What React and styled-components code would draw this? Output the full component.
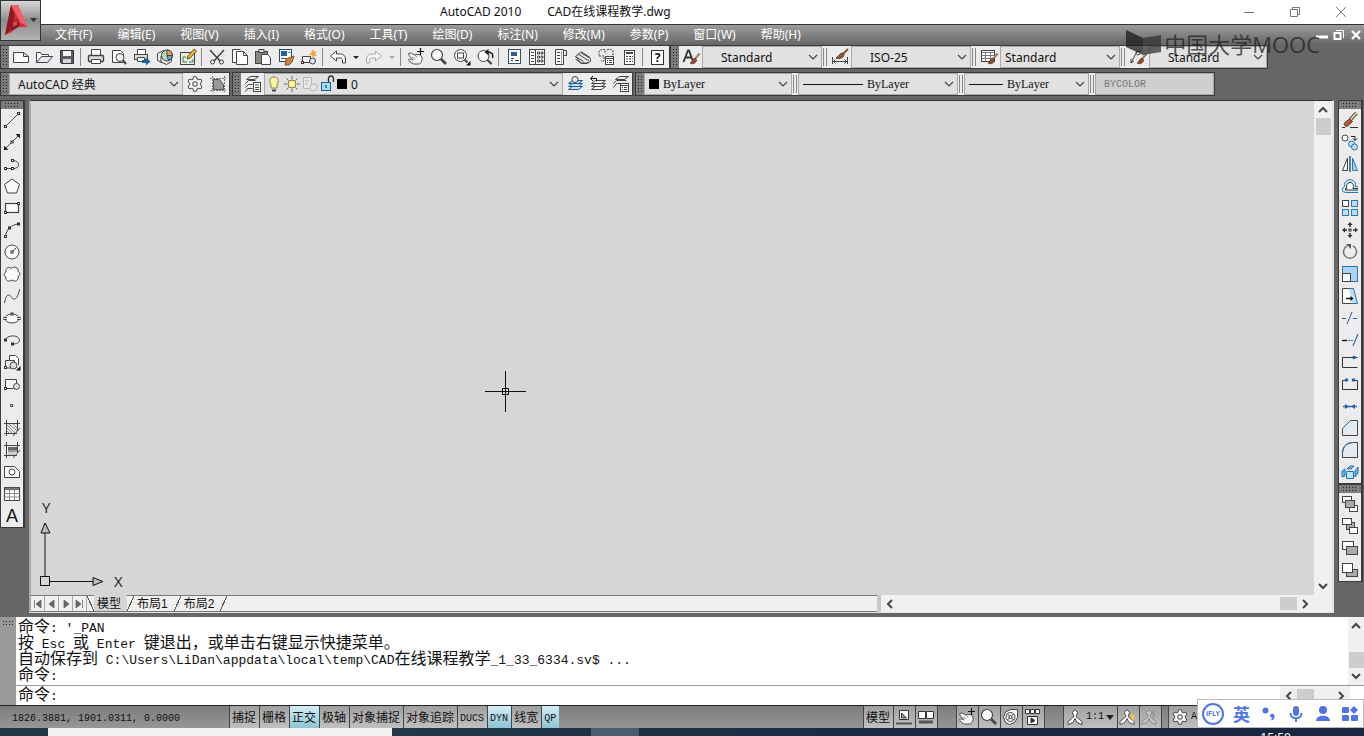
import { useState } from "react";
import styled, { createGlobalStyle, css } from "styled-components";
import { Settings } from "lucide-react";

const uiFont = `"Noto Sans", "Noto Sans CJK SC", sans-serif`;
const monoFont = `"Liberation Mono", "Noto Sans CJK SC", monospace`;

const Node = ({ x, y, c }) => (
  <rect x={x - 1} y={y - 1} width="2" height="2" fill="#fff" stroke={c || "#333"} />
);

const Brush = () => (
  <g transform="translate(5 4) scale(0.8)">
    <path d="M15.5 2L10 8.500" stroke="#8a5a34" strokeWidth="2.400" />
    <path d="M15 2L10.500 7.500" stroke="#e5c79c" strokeWidth="0.800" />
    <path d="M10 8c-3 0-3 3-6 6 4 2 8-1 8-4z" fill="#8a4f30" stroke="#5f3520" />
  </g>
);

const Hand = () => (
  <>
    <path
      d="M1.500 5.500c2-1 4 0 6 1.500 2-1 5-1 7 1 1 3 1 5-2 8H6.500C4 15 2 13 1.500 11.500c1-1 3 0 4.500.5C4 10 2 8 1.500 5.500z"
      fill="#f6f6f6"
      stroke="#555"
    />
    <path d="M7.500 7l3 2M5 9l3 2" stroke="#888" />
  </>
);

const Sheets = ({ fill }) => (
  <>
    <path d="M6.500 11.500h10l-4 3h-10z" fill={fill} />
    <path d="M6.500 8.500h10l-4 3h-10z" fill={fill} />
    <path d="M6.500 5.500h10l-4 3h-10z" fill={fill} />
  </>
);

const icons = {
  newFile: <path d="M1.500 4.500h10l5 4v6h-15zM11.500 4.500v4h5" fill="#fff" />,
  open: (
    <>
      <path d="M1.500 14.500v-10h4l1 2h7v2" fill="#fff" />
      <path d="M1.500 14.500l5-6h11l-5 6z" fill="#e8e8ee" />
    </>
  ),
  save: (
    <>
      <path d="M2.500 2.500h13v13h-12l-1-1z" fill="#5a5a66" stroke="#333" />
      <rect x="5" y="3" width="8" height="5" fill="#f4f4f4" stroke="none" />
      <rect x="5" y="11" width="8" height="4" fill="#d5d5d5" stroke="none" />
    </>
  ),
  print: (
    <>
      <path d="M4.500 7.500v-6h9v6" fill="#fff" />
      <rect x="1.500" y="7.500" width="15" height="6" rx="1" fill="#ddd" strokeWidth="1.400" />
      <path d="M4.500 11.500h9v4h-9z" fill="#fff" />
    </>
  ),
  preview: (
    <>
      <path d="M2.500 2.500h8l3 3v9h-11z" fill="#fff" />
      <circle cx="10" cy="9.500" r="4" fill="#e8f0f4" />
      <path d="M13 12.500l3 3.500" strokeWidth="2" />
    </>
  ),
  publish: (
    <>
      <path d="M4.500 6.500v-5h8v5" fill="#fff" />
      <rect x="1.500" y="6.500" width="13" height="5" fill="#ddd" />
      <path d="M4.500 9.500h7v4h-7z" fill="#fff" />
      <path d="M9 12h4V9.500l4.500 4-4.500 4V15H9z" fill="#1d62a8" stroke="none" />
    </>
  ),
  dwf: (
    <>
      <path d="M1.500 5.500l6-3 8 2v9l-5 3-9-4z" fill="#e6f2f2" />
      <circle cx="11" cy="7.500" r="5.500" fill="#b4dcb8" />
      <path d="M11 7.500V2a5.500 5.500 0 0 1 5.500 5.500z" fill="#e9a23a" />
      <path d="M11 7.500h5.500a6 6 0 0 1-4 5z" fill="#6aa6da" />
      <path d="M5 8v7" />
    </>
  ),
  markup: (
    <>
      <rect x="1.500" y="4.500" width="14" height="12" fill="#e4efdd" />
      <path d="M4 9h3M4 9v5h4M10 14h4v-3" stroke="#3f7a52" />
      <path d="M8 11l1-3 6-7 2.500 2-6.500 7z" fill="#f0b93c" stroke="#6d4c1a" />
    </>
  ),
  cut: (
    <>
      <path d="M2 2l10 11M16 2L6 13" strokeWidth="1.600" />
      <circle cx="4.500" cy="14" r="2" />
      <circle cx="13.500" cy="14" r="2" />
    </>
  ),
  copy: (
    <>
      <path d="M9.500 14.500h-8v-13h8" fill="#fff" />
      <path d="M5.500 3.500h7l4 4v9h-11zM12.500 3.500v4h4" fill="#fff" />
    </>
  ),
  paste: (
    <>
      <rect x="1.500" y="3.500" width="12" height="12" fill="#8d8780" />
      <rect x="5" y="1.500" width="5" height="3" fill="#ddd" />
      <path d="M7.500 6.500h6l3 3v7h-9z" fill="#fff" />
    </>
  ),
  match: (
    <>
      <rect x="2.500" y="1.500" width="12" height="12" fill="#fff" stroke="#1f4e79" />
      <rect x="4" y="3" width="6" height="5" fill="#1f5fa0" stroke="none" />
      <path d="M11.500 4.500h2M4 10.500h5" stroke="#555" />
      <path d="M9 11l5-2 3-1-2 6-3 3H8z" fill="#c98544" stroke="#8a4f2a" />
    </>
  ),
  blockEdit: (
    <>
      <path d="M2.500 14.500v-6h8v6z" fill="#f4f4f4" />
      <circle cx="12.500" cy="13" r="3" fill="#d8e6ee" />
      <Node x={2.500} y={14.500} />
      <path d="M13 1l1 3 3-1-2 3 2 2-3 0-1 2-1-3-3 0 2-2z" fill="#f3a53a" stroke="none" />
    </>
  ),
  undo: <path d="M1.500 8l6-5v3h4c3 0 5 2 5 5v4h-3v-3c0-1-1-2-2-2h-4v3z" fill="#fff" />,
  redo: (
    <path
      d="M16.500 8l-6-5v3h-4c-3 0-5 2-5 5v4h3v-3c0-1 1-2 2-2h4v3z"
      fill="#f4f4f4"
      stroke="#aaa"
    />
  ),
  pan: (
    <>
      <Hand />
      <path d="M13.500 0v7M10 3.500h7" stroke="#111" strokeWidth="1.200" />
    </>
  ),
  zoom: (
    <>
      <circle cx="7" cy="7" r="5.500" fill="#fafafa" strokeWidth="1.200" />
      <path d="M11 11l5 5" strokeWidth="2.600" />
    </>
  ),
  zoomWindow: (
    <>
      <circle cx="7.500" cy="7.500" r="6" fill="#fafafa" />
      <rect x="4.500" y="5" width="6" height="5" />
      <path d="M11.500 11.500l3 3" strokeWidth="2" />
      <path d="M17.500 13v4.500H13z" fill="#111" stroke="none" />
    </>
  ),
  zoomPrev: (
    <>
      <circle cx="7.500" cy="8" r="5.500" fill="#fafafa" />
      <path d="M11.500 12l4 4" strokeWidth="2.200" />
      <path d="M16.500 10c1-4-1-6-5-6" stroke="#111" strokeWidth="1.400" />
      <path d="M12.500 1v6.500L8.500 4z" fill="#111" stroke="none" />
    </>
  ),
  properties: (
    <>
      <rect x="3.500" y="1.500" width="12" height="14" fill="#fff" stroke="#33536e" />
      <rect x="6" y="4" width="6" height="4" fill="#2d5c8c" stroke="none" />
      <path d="M6 10.500h3M10 12.500h4M6 12.500h2" />
    </>
  ),
  designCenter: (
    <>
      <rect x="1.500" y="1.500" width="15" height="15" fill="#fff" />
      <path d="M7.500 1.500v15M3 4.500h3M3 7.500h3M3 10.500h3M3 13.500h3" />
      <path d="M9.500 4h2v2h-2zM13 4h2v2h-2zM9.500 8h2v2h-2zM13 8h2v2h-2zM9.500 12h2v2h-2zM13 12h2v2h-2z" />
    </>
  ),
  palettes: (
    <>
      <path d="M4.500 1.500h8v15h-8z" fill="#fff" />
      <path d="M12.500 2.500h3v5h-3M6 4.500h3M6 7.500h3M6 10.500h3M6 13.500h3" />
      <path d="M10.500 3v12" stroke="#999" />
    </>
  ),
  sheetSet: (
    <>
      <path d="M1.500 8.500l5-4 10 6v3l-4 2h-5z" fill="#e8e8e8" />
      <path d="M4 6l11 7M1.500 11l5 4h8M7 3.500l9 6M1.500 8.500l8 5" />
    </>
  ),
  markupSet: (
    <>
      <path d="M2 7.500V3l3-1.500h3V5M10 2l3-1 3 2v5" strokeDasharray="2 1" />
      <path d="M2 8h5v5H4" strokeDasharray="2 1" />
      <rect x="8.500" y="8.500" width="8" height="8" fill="#fff" />
      <path d="M8.500 10.500h8M10 12.500h1M12 12.500h3M10 14.500h1M12 14.500h3" />
    </>
  ),
  calc: (
    <>
      <rect x="4.500" y="2.500" width="10" height="14" fill="#fff" />
      <path d="M6 5h7" strokeWidth="2" />
      <path d="M6 8.500h7M6 11h7M6 13.500h7" strokeDasharray="2 1" />
    </>
  ),
  textStyle: (
    <>
      <path d="M1.500 14L6 2.500h1L10.500 12M3.500 9.500h6" stroke="#333" strokeWidth="1.800" />
      <Brush />
    </>
  ),
  dimStyle: (
    <>
      <path d="M1.500 9v7M16.500 9v7M2 13.500h14M4.500 11.500l-2 2 2 2M13.500 11.500l2 2-2 2" />
      <path d="M17 1l-5 5" stroke="#8a5a34" strokeWidth="2" />
      <path d="M12 5c-3 0-4 3-7 5 4 1 7 0 8-3z" fill="#9a5a38" stroke="#5f3520" />
    </>
  ),
  tableStyle: (
    <>
      <rect x="1.500" y="2.500" width="13" height="11" fill="#fff" />
      <path d="M1.500 4.500h13M1.500 7.500h13M1.500 10.500h13M5.500 4v9M10.500 4v9" stroke="#777" />
      <Brush />
    </>
  ),
  leaderStyle: (
    <>
      <path d="M2 15L8 3h4M2 11v4l3-2M8 3c-2 3 0 5 3 3" />
      <Brush />
    </>
  ),
  gear: <Settings size={18} strokeWidth={1.4} fill="#f6f6f6" color="#555" />,
  workspace: (
    <>
      <path d="M4.500 4.500h6l4 5v5h-10z" fill="#999" stroke="#555" />
      <path d="M1 3.500h16M1 15.500h16M3.500 1v16M15.500 1v16" strokeDasharray="2 1" stroke="#777" />
    </>
  ),
  layerProps: (
    <>
      <path d="M6.500 1.500h8l-4 3h-8zM1.500 8.500l3-3h7M1.500 12.500l3-3h4M1.500 16.500l2-3h5" fill="none" />
      <rect x="9.500" y="7.500" width="7" height="9" fill="#fff" />
      <path d="M11 10h4M11 12.500h4M11 14.500h4" />
    </>
  ),
  makeCurrent: (
    <>
      <g stroke="#1e5f96">
        <Sheets fill="#c4e2f4" />
      </g>
      <circle cx="9" cy="4.500" r="3" fill="#f2f6f8" />
    </>
  ),
  layerPrev: (
    <>
      <Sheets fill="#fafafa" />
      <path d="M1.500 3.500h6v3M4 1L1.500 3.500 4 6" stroke="#111" />
    </>
  ),
  layerStates: (
    <>
      <path d="M7.500 1.500h9l-4 3h-9zM1.500 8.500l3-3h10M1.500 12.500l3-4h5" />
      <rect x="8.500" y="8.500" width="8" height="8" fill="#fff" />
      <path d="M8.500 10.500h8M10 12.500h1M12 12.500h3M10 14.500h1M12 14.500h3" />
    </>
  ),
  line: (
    <>
      <path d="M2.500 15.500L15.500 2.500" />
      <Node x={2.500} y={15.500} />
      <Node x={15.500} y={2.500} />
    </>
  ),
  xline: (
    <>
      <path d="M2 16L16 2" />
      <path d="M1 17v-4.500L5.500 17zM17 1v4.500L12.500 1z" fill="#222" stroke="none" />
      <Node x={9} y={9} />
    </>
  ),
  pline: (
    <>
      <path d="M2.500 13.500h8c7 0 7-8-1-8" />
      <Node x={2.500} y={13.500} />
      <Node x={9.500} y={13.500} />
      <Node x={9.500} y={5.500} />
    </>
  ),
  polygon: <path d="M9 2l7.500 5.500-3 8.500h-9l-3-8.500z" fill="#fafafa" />,
  rectangle: (
    <>
      <rect x="2.500" y="4.500" width="13" height="9" fill="#fafafa" strokeWidth="1.200" />
      <Node x={2.500} y={13.500} />
      <Node x={15.500} y={4.500} />
    </>
  ),
  arc: (
    <>
      <path d="M2.500 15.500C3 9 8 3.500 15.500 3" />
      <Node x={2.500} y={15.500} />
      <Node x={6.500} y={7} />
      <Node x={15.500} y={3} />
    </>
  ),
  circle: (
    <>
      <circle cx="9" cy="9" r="7" fill="#fafafa" />
      <path d="M9 9l4-4" />
      <Node x={9} y={9} />
    </>
  ),
  cloud: (
    <path
      d="M8 3.500c3-3 8-1 7 3 3 1 2 4 0 5 1 4-3 6-6 3.500-3 2-7 1-6-3-3-1-2-4 0-5-1-4 3-6 5-3.500z"
      fill="#fafafa"
    />
  ),
  spline: <path d="M1.500 16c1-5 2-8 4-8 3 0 3 5 6 4s4-5 5-10" />,
  ellipse: (
    <>
      <ellipse cx="9" cy="9.500" rx="7" ry="4.500" fill="#fafafa" />
      <Node x={2} y={9.500} />
      <Node x={9} y={5} />
      <Node x={16} y={9.500} />
    </>
  ),
  ellipseArc: (
    <>
      <path d="M2.500 9c1-5 13-6 14 0 0 3-3 4-7 4" />
      <Node x={2.500} y={9} />
      <Node x={9.500} y={13} />
    </>
  ),
  insertBlock: (
    <>
      <path d="M6.500 7V2.500h6l3 3V12" fill="#fff" />
      <path d="M2.500 15V7.500h9V15z" fill="#ececec" />
      <circle cx="10.500" cy="12.500" r="3.500" fill="#ddd" />
      <Node x={2.500} y={14.500} />
      <path d="M17.500 13v4.500H13z" fill="#111" stroke="none" />
    </>
  ),
  makeBlock: (
    <>
      <path d="M2.500 13.500v-9h11v9z" fill="#f4f4f4" />
      <circle cx="13.500" cy="11.500" r="3" fill="#e4e4e4" />
      <Node x={2.500} y={13.500} />
    </>
  ),
  point: <Node x={8.500} y={8.500} c="#555" />,
  hatch: (
    <>
      <path d="M1 4.500h16M1 14.500h13M3.500 1v16M14.500 1v11M17 9l-7 8" />
      <path d="M4 6l8 8M4 9l5 5M6 5l8 7M10 5l4 4M4 12l2 2" stroke="#888" />
    </>
  ),
  gradient: (
    <>
      <path d="M5 6h9v3H5z" fill="#666" stroke="none" />
      <path d="M5 9h9v2H5z" fill="#999" stroke="none" />
      <path d="M5 11h7v3H5z" fill="#ccc" stroke="none" />
      <path d="M1 4.500h16M1 14.500h13M3.500 1v16M14.500 1v11M17 9l-7 8" />
    </>
  ),
  region: (
    <>
      <path d="M1.500 3.500h10l5 5v6h-15z" fill="#fafafa" />
      <circle cx="9" cy="9" r="3" fill="#fff" />
    </>
  ),
  table: (
    <>
      <rect x="1.500" y="2.500" width="15" height="13" fill="#fff" />
      <path d="M2 4h14" strokeWidth="2.400" stroke="#777" />
      <path d="M1.500 8.500h15M1.500 12h15M6.500 5v10M11.500 5v10" stroke="#888" />
    </>
  ),
  erase: (
    <>
      <path d="M15.500 2L9 9" stroke="#5f5238" strokeWidth="3.800" />
      <path d="M15.500 2L9 9" stroke="#e8d9a8" strokeWidth="1.800" />
      <path d="M8.500 8l-5 4c-1 2 1 4 3 3l5-4.500z" fill="#b8583c" stroke="#5d2c1c" />
      <path d="M1 16.500h3M9 16.500h8" stroke="#333" />
    </>
  ),
  copyObj: (
    <>
      <circle cx="4" cy="5" r="3" fill="#fff" />
      <path d="M10 3.500h4v4M12 5.500l2 2 2-2" stroke="#222" />
      <circle cx="10.500" cy="11" r="3" fill="#bfe0f4" stroke="#2a78b4" />
      <circle cx="13.500" cy="14" r="3" fill="#bfe0f4" stroke="#2a78b4" />
    </>
  ),
  mirror: (
    <>
      <path d="M6.500 3v12.500h-5z" fill="#fff" />
      <path d="M11.500 3v12.500h5z" fill="#9fd0ee" stroke="#2a78b4" />
      <path d="M9 1v16" stroke="#1c4f7a" strokeWidth="1.400" />
    </>
  ),
  offset: (
    <>
      <path
        d="M17 9.500h-2.500c1.500-9-12.500-9-11 0-3 1-3 6 1 6H17"
        fill="#cfe8f6"
        stroke="#2a78b4"
      />
      <path d="M17 11.500h-5c3-8-9-8-6 0H4.500v1.500H17" fill="#fff" stroke="#333" />
    </>
  ),
  array: (
    <>
      <rect x="1.500" y="1.500" width="6" height="6" fill="#fff" />
      <rect x="10.500" y="1.500" width="6" height="6" fill="#bfe0f4" stroke="#2a78b4" />
      <rect x="1.500" y="10.500" width="6" height="6" fill="#bfe0f4" stroke="#2a78b4" />
      <rect x="10.500" y="10.500" width="6" height="6" fill="#bfe0f4" stroke="#2a78b4" />
    </>
  ),
  move: (
    <>
      <path
        d="M9 1l2.500 3h-5zM9 17l2.500-3h-5zM1 9l3-2.500v5zM17 9l-3-2.500v5z"
        fill="#333"
        stroke="none"
      />
      <path d="M9 3v3M9 12v3M3 9h3M12 9h3" stroke="#333" strokeWidth="1.600" />
      <Node x={9} y={9} />
    </>
  ),
  rotate: (
    <>
      <path d="M12 3a6.500 6.500 0 1 1-6 0" stroke="#777" strokeWidth="1.500" />
      <path d="M5 1h5v5z" fill="#555" stroke="none" />
    </>
  ),
  scale: (
    <>
      <rect x="1.500" y="1.500" width="15" height="15" fill="#a8d6f0" stroke="#2a78b4" />
      <rect x="1.500" y="8.500" width="8" height="8" fill="#fff" />
    </>
  ),
  stretch: (
    <>
      <path d="M8.500 1.500h4l4 15h-8z" fill="#bfe0f4" stroke="#2a78b4" />
      <path d="M8.500 1.500h-7v15h9" fill="#fff" />
      <path d="M5 11.500h6" stroke="#111" strokeWidth="1.400" />
      <path d="M12.500 11.500L9.500 9v5z" fill="#111" stroke="none" />
    </>
  ),
  trim: (
    <>
      <path d="M1 9.500h5M12 9.500h5" stroke="#2a5f98" strokeDasharray="4 1" />
      <path d="M11 3L6 15" stroke="#2a5f98" />
    </>
  ),
  extend: (
    <>
      <path d="M1 9.500h5" stroke="#111" strokeWidth="1.400" />
      <path d="M7 9.500h5" stroke="#2a78b4" strokeDasharray="2 1" />
      <path d="M17 3l-5 12" stroke="#2a78b4" strokeWidth="1.200" />
    </>
  ),
  breakPoint: (
    <>
      <path d="M16.500 4.500h-15v10h15" stroke="#333" />
      <circle cx="13" cy="4.500" r="1.800" fill="#1e64aa" stroke="none" />
    </>
  ),
  breakObj: (
    <>
      <path d="M4.500 5.500h-3v9h15v-9h-3" stroke="#333" />
      <circle cx="5.500" cy="5" r="1.800" fill="#1e64aa" stroke="none" />
      <circle cx="12.500" cy="5" r="1.800" fill="#1e64aa" stroke="none" />
    </>
  ),
  join: (
    <>
      <path d="M2 9.500h14" stroke="#1e64aa" strokeWidth="1.400" />
      <path d="M4 7l4 2.500L4 12zM14 7l-4 2.500 4 2.500z" fill="#1e64aa" stroke="none" />
    </>
  ),
  chamfer: (
    <>
      <path d="M9.500 1.500h7v15h-15v-7z" fill="#e4eaf2" stroke="#444" />
      <path d="M1.500 9.500l8-8" stroke="#1e64aa" />
    </>
  ),
  fillet: (
    <>
      <path d="M12.500 1.500h4v15h-15v-4c0-7 4-11 11-11z" fill="#e4eaf2" stroke="#444" />
      <path d="M1.500 12.500c0-7 4-11 11-11" stroke="#1e64aa" />
    </>
  ),
  explode: (
    <g stroke="#1e74b4" fill="#bfe4f8">
      <path d="M5.500 8.500h7v7h-7z" />
      <path d="M6 6l3-3h4l-3 3zM14 8l3-4v6l-3 4zM1 8l3-2v7l-3 1z" fill="#6fb6e4" />
    </g>
  ),
  front: (
    <>
      <rect x="1.500" y="1.500" width="9" height="6" fill="#fff" />
      <rect x="8.500" y="10.500" width="8" height="6" fill="#fff" />
      <rect x="4.500" y="5.500" width="9" height="7" fill="#aaa" />
    </>
  ),
  back: (
    <>
      <rect x="5.500" y="5.500" width="8" height="7" fill="#aaa" />
      <rect x="1.500" y="1.500" width="9" height="6" fill="#fff" />
      <rect x="8.500" y="10.500" width="8" height="6" fill="#fff" />
    </>
  ),
  above: (
    <>
      <rect x="1.500" y="2.500" width="11" height="8" fill="#fff" />
      <rect x="5.500" y="7.500" width="11" height="8" fill="#aaa" />
    </>
  ),
  under: (
    <>
      <rect x="5.500" y="8.500" width="11" height="7" fill="#aaa" />
      <rect x="1.500" y="2.500" width="10" height="9" fill="#fff" />
    </>
  ),
  bulb: (
    <>
      <path d="M9 2c-5 0-5 5-3 8v3h6v-3c2-3 2-8-3-8z" fill="#fbf3a8" stroke="#8a8440" />
      <path d="M7 15.500h4" stroke="#444" strokeWidth="2" />
    </>
  ),
  sun: (
    <>
      <path
        d="M9 1v3M9 14v3M1 9h3M14 9h3M3.500 3.500l2 2M12.500 12.500l2 2M3.500 14.500l2-2M12.500 5.500l2-2"
        stroke="#666"
      />
      <circle cx="9" cy="9" r="4" fill="#fbf0a0" stroke="#8a7a40" />
    </>
  ),
  vpFreeze: (
    <g stroke="#b4b4b4" fill="#e8e8e8">
      <path d="M2.500 2.500h8v11h-8zM4 6h4M4 9h3" />
      <circle cx="12.500" cy="12.500" r="3.500" />
    </g>
  ),
  unlock: (
    <>
      <path d="M9.500 8V4c0-4 5-4 5 0v3" stroke="#333" strokeWidth="1.400" />
      <rect x="2.500" y="7.500" width="9" height="8" fill="#a8daf4" stroke="#1e5f96" />
      <path d="M7 10v3" stroke="#1e5f96" strokeWidth="1.400" />
    </>
  ),
  layoutTri: (
    <g stroke="#333" fill="#fff">
      <path d="M4.500 2.500h9v9h-9z" />
      <path d="M6.500 5v5h5z" fill="#999" />
      <path d="M1 15.500h16" strokeWidth="2" stroke="#555" />
    </g>
  ),
  layouts: (
    <g stroke="#333" fill="#fff">
      <path d="M1.500 3.500h7v7h-7zM9.500 3.500h7v7h-7z" />
      <path d="M2 14h14" strokeWidth="3" stroke="#555" />
    </g>
  ),
  wheel: (
    <g stroke="#444" fill="#eee">
      <path d="M1.500 9l2-5 5-2.500h7v8l-3 5-5 2-4-2z" fill="#f8f8f8" />
      <circle cx="8.500" cy="9" r="4.500" />
      <path d="M5.500 6l6 6M11.500 6l-6 6" />
      <circle cx="8.500" cy="9" r="1.500" fill="#fff" />
    </g>
  ),
  showMotion: (
    <g stroke="#333" fill="#fff">
      <path d="M1.500 1.500h4v4h-4zM6.500 1.500h4v4h-4zM11.500 1.500h4v4h-4z" />
      <path d="M3.500 8.500h10v8h-10z" />
      <path d="M7 10v5l4-2.500z" fill="#333" />
    </g>
  ),
  annoScale: (
    <path
      d="M9 1.500l2.500 3-1.500 4 6 5v3l-5-2-2-4-2 4-5 2v-3l6-5-1.500-4z"
      fill="#fff"
      stroke="#444"
    />
  ),
  annoVis: (
    <>
      <path
        d="M8 1.500l2.500 3-1.500 4 6 5v3l-5-2-2-4-2 4-5 2v-3l6-5-1.500-4z"
        fill="#fff"
        stroke="#555"
      />
      <path d="M12 6h3.500v4l-2 4-1.500-4z" fill="#f3c04a" stroke="none" />
    </>
  ),
  annoAuto: (
    <>
      <path
        d="M8 1.500l2.500 3-1.500 4 6 5v3l-5-2-2-4-2 4-5 2v-3l6-5-1.500-4z"
        fill="#c4c4c4"
        stroke="#888"
      />
      <path d="M13 2l-2 4h3l-2 4" stroke="#888" />
    </>
  ),
};

const Icon = ({ name }) => (
  <svg width="18" height="18" viewBox="0 0 18 18" fill="none" stroke="#444" aria-hidden="true">
    {icons[name]}
  </svg>
);

const arrows = {
  down: "M1 3l4 4 4-4",
  up: "M1 7l4-4 4 4",
  left: "M7 1L3 5l4 4",
  right: "M3 1l4 4-4 4",
};

const Arrow = ({ dir, thin }) => (
  <svg width="10" height="10" viewBox="0 0 10 10" fill="none" stroke="#444" aria-hidden="true">
    <path d={arrows[dir]} strokeWidth={thin ? 1.2 : 2} />
  </svg>
);

const Combo = ({ label, value, width, indent, serif, disabled, children }) => (
  <ComboBox $width={width} $disabled={disabled}>
    {children}
    <ComboSelect
      aria-label={label}
      defaultValue={value}
      disabled={disabled}
      $indent={indent}
      $font={serif}
    >
      <option>{value}</option>
    </ComboSelect>
    {!disabled && <Arrow dir="down" thin />}
  </ComboBox>
);

const ToolButtons = ({ names }) =>
  names.map((name) => (
    <ToolButton key={name} type="button" aria-label={name}>
      <Icon name={name} />
    </ToolButton>
  ));

// full-width text is set larger than the latin text in the command window
const CommandText = ({ text }) =>
  text
    .split(/([\u3000-\u9fff\uff00-\uffef]+)/)
    .map((run, i) => (i % 2 ? <Wide key={i}>{run}</Wide> : run));

const menus = [
  "文件(F)",
  "编辑(E)",
  "视图(V)",
  "插入(I)",
  "格式(O)",
  "工具(T)",
  "绘图(D)",
  "标注(N)",
  "修改(M)",
  "参数(P)",
  "窗口(W)",
  "帮助(H)",
];

const drawTools = [
  "line",
  "xline",
  "pline",
  "polygon",
  "rectangle",
  "arc",
  "circle",
  "cloud",
  "spline",
  "ellipse",
  "ellipseArc",
  "insertBlock",
  "makeBlock",
  "point",
  "hatch",
  "gradient",
  "region",
  "table",
];

const modifyTools = [
  "erase",
  "copyObj",
  "mirror",
  "offset",
  "array",
  "move",
  "rotate",
  "scale",
  "stretch",
  "trim",
  "extend",
  "breakPoint",
  "breakObj",
  "join",
  "chamfer",
  "fillet",
  "explode",
];

const history = [
  "命令: '_PAN",
  "按 Esc 或 Enter 键退出，或单击右键显示快捷菜单。",
  "自动保存到 C:\\Users\\LiDan\\appdata\\local\\temp\\CAD在线课程教学_1_33_6334.sv$ ...",
  "命令:",
];

const modes = ["捕捉", "栅格", "正交", "极轴", "对象捕捉", "对象追踪", "DUCS", "DYN", "线宽", "QP"];

const App = () => {
  const [activeModes, setActiveModes] = useState(["正交", "DYN", "QP"]);
  const [activeTab, setActiveTab] = useState("模型");

  const toggleMode = (mode) => {
    setActiveModes((prev) =>
      prev.includes(mode) ? prev.filter((m) => m !== mode) : [...prev, mode]
    );
  };

  return (
    <Page>
      <GlobalStyle />
      <AppButton type="button" aria-label="应用程序菜单">
        <svg width="39" height="39" viewBox="0 0 39 39" aria-hidden="true">
          <path d="M10 4l7 0 9 22-7 0-3-4-4 4-1 5-7 3z" fill="#d42f3c" />
          <path d="M10 4l-6 30 5-4 5-15z" fill="#8f1822" />
          <path d="M10 4l7 0 9 21-6-3z" fill="#f0606a" />
          <path d="M8 23l8-5 3 7-8 5z" fill="#8f1420" />
          <path d="M12 21l4-1v4l-4 2z" fill="#d84450" />
          <path d="M29 17h7l-3.500 4z" fill="#333" />
        </svg>
      </AppButton>

      <TitleBar>
        <Title>
          <span>AutoCAD 2010</span>
          <span>CAD在线课程教学.dwg</span>
        </Title>
        <WindowButtons>
          <WindowButton type="button" aria-label="最小化">
            <svg width="12" height="12" fill="none" stroke="#777">
              <path d="M1 6.500h10" />
            </svg>
          </WindowButton>
          <WindowButton type="button" aria-label="还原">
            <svg width="12" height="12" fill="none" stroke="#777">
              <path d="M1.500 3.500h7v7h-7zM3.500 3V1.500h7v7H9" />
            </svg>
          </WindowButton>
          <WindowButton type="button" aria-label="关闭">
            <svg width="12" height="12" fill="none" stroke="#777">
              <path d="M1 1l10 10M11 1L1 11" />
            </svg>
          </WindowButton>
        </WindowButtons>
      </TitleBar>

      <MenuBar>
        {menus.map((menu) => (
          <MenuItem key={menu} type="button">
            {menu}
          </MenuItem>
        ))}
        <DocButtons>
          <DocButton type="button" aria-label="最小化文档">
            <svg width="12" height="12" fill="none" stroke="#fff">
              <path d="M0 8h12" strokeWidth="3" />
            </svg>
          </DocButton>
          <DocButton type="button" aria-label="还原文档">
            <svg width="12" height="12" fill="none" stroke="#fff">
              <path d="M1.500 4h6v6h-6z" strokeWidth="2" />
              <path d="M3 1.500h7.500V9" />
            </svg>
          </DocButton>
          <DocButton type="button" aria-label="关闭文档">
            <svg width="12" height="12" fill="none" stroke="#fff">
              <path d="M2 2l8 8M10 2l-8 8" strokeWidth="2.400" />
            </svg>
          </DocButton>
        </DocButtons>
      </MenuBar>

      <ToolbarRows>
        <ToolbarRow>
          <Toolbar>
            <Grip />
            <ToolButtons names={["newFile", "open", "save"]} />
            <Separator />
            <ToolButtons names={["print", "preview", "publish", "dwf", "markup"]} />
            <Separator />
            <ToolButtons names={["cut", "copy", "paste", "match", "blockEdit"]} />
            <Separator />
            <ToolButtons names={["undo"]} />
            <CaretButton type="button" aria-label="放弃列表">
              <Caret />
            </CaretButton>
            <ToolButtons names={["redo"]} />
            <CaretButton type="button" aria-label="重做列表">
              <Caret $muted />
            </CaretButton>
            <Separator />
            <ToolButtons names={["pan", "zoom", "zoomWindow", "zoomPrev"]} />
            <Separator />
            <ToolButtons
              names={["properties", "designCenter", "palettes", "sheetSet", "markupSet", "calc"]}
            />
            <Separator />
            <ToolButton type="button" aria-label="帮助">
              <HelpMark>?</HelpMark>
            </ToolButton>
          </Toolbar>
          <Toolbar>
            <Grip />
            <ToolButtons names={["textStyle"]} />
            <Combo label="文字样式" value="Standard" width={120} indent={18} />
            <Separator $double />
            <ToolButtons names={["dimStyle"]} />
            <Combo label="标注样式" value="ISO-25" width={120} indent={18} />
            <Separator $double />
            <ToolButtons names={["tableStyle"]} />
            <Combo label="表格样式" value="Standard" width={120} indent={4} />
            <Separator $double />
            <ToolButtons names={["leaderStyle"]} />
            <Combo label="多重引线样式" value="Standard" width={118} indent={18} />
          </Toolbar>
        </ToolbarRow>
        <ToolbarRow $gap={2}>
          <Toolbar>
            <Grip />
            <Combo label="工作空间" value="AutoCAD 经典" width={174} indent={8} />
            <ToolButtons names={["gear", "workspace"]} />
          </Toolbar>
          <Toolbar>
            <Grip />
            <ToolButtons names={["layerProps"]} />
            <Combo label="图层" value="0" width={299} indent={4}>
              <LayerState>
                {["bulb", "sun", "vpFreeze", "unlock"].map((name) => (
                  <Icon key={name} name={name} />
                ))}
              </LayerState>
              <Swatch />
            </Combo>
            <ToolButtons names={["makeCurrent", "layerPrev", "layerStates"]} />
          </Toolbar>
          <Toolbar>
            <Grip />
            <Combo label="颜色" value="ByLayer" width={148} indent={4} serif="serif">
              <Swatch $inset />
            </Combo>
            <Separator $double />
            <Combo label="线型" value="ByLayer" width={160} indent={4} serif="serif">
              <LineSample $width={60} />
            </Combo>
            <Separator $double />
            <Combo label="线宽" value="ByLayer" width={125} indent={4} serif="serif">
              <LineSample $width={34} />
            </Combo>
            <Separator $double />
            <Combo label="打印样式" value="BYCOLOR" width={119} indent={8} serif="mono" disabled />
          </Toolbar>
        </ToolbarRow>
      </ToolbarRows>

      <Workspace>
        <Dock>
          <SideToolbar>
            <SideGrip />
            {drawTools.map((name) => (
              <SideButton key={name} type="button" aria-label={name}>
                <Icon name={name} />
              </SideButton>
            ))}
            <SideButton type="button">
              <LetterTool>A</LetterTool>
            </SideButton>
          </SideToolbar>
        </Dock>

        <DrawingWindow>
          <DrawingRow>
            <Canvas>
              <Crosshair width="41" height="41" fill="none" stroke="#111">
                <path d="M0 20.500h41M20.500 0v41" />
                <rect x="17.500" y="17.500" width="6" height="6" />
              </Crosshair>
              <Ucs width="96" height="98" fill="none" stroke="#111">
                <rect x="2.500" y="79.500" width="9" height="9" />
                <path d="M7 79V26M12 84.500h53" />
                <path d="M7 26l-4 10h9zM65 84.500l-10-4v8z" fill="#bbb" />
                <text x="4" y="16">
                  Y
                </text>
                <text x="76" y="90">
                  X
                </text>
              </Ucs>
            </Canvas>
            <VScroll $width={18}>
              <Arrow dir="up" />
              <Thumb $height={17} />
              <Spacer />
              <Arrow dir="down" />
            </VScroll>
          </DrawingRow>
          <TabRow>
            <TabBar>
              {["M4.500 3v8L11 3v8L6 7z", "M9 3v8L4 7z", "M5 3v8l5-4z", "M9.500 3v8M3 3v8l5-4z"].map(
                (d, i) => (
                  <TabNav key={d} type="button" aria-label="滚动布局">
                    <svg width="13" height="14" fill="#666" stroke="#666">
                      <path d={i === 0 ? "M3.500 3v8M10 3v8L5 7z" : d} strokeWidth="0.800" />
                    </svg>
                  </TabNav>
                )
              )}
              <Slash $back />
              {["模型", "布局1", "布局2"].map((tab) => (
                <TabGroup key={tab}>
                  <Tab type="button" $active={tab === activeTab} onClick={() => setActiveTab(tab)}>
                    {tab}
                  </Tab>
                  <Slash />
                </TabGroup>
              ))}
            </TabBar>
            <Splitter />
            <HScroll>
              <Arrow dir="left" />
              <Spacer />
              <Thumb $width={17} />
              <Arrow dir="right" />
            </HScroll>
            <Corner />
          </TabRow>
        </DrawingWindow>

        <Dock>
          <SideToolbar>
            <SideGrip />
            {modifyTools.map((name) => (
              <SideButton key={name} type="button" aria-label={name}>
                <Icon name={name} />
              </SideButton>
            ))}
          </SideToolbar>
          <SideToolbar>
            <SideGrip />
            {["front", "back", "above", "under"].map((name) => (
              <SideButton key={name} type="button" aria-label={name}>
                <Icon name={name} />
              </SideButton>
            ))}
          </SideToolbar>
        </Dock>
      </Workspace>

      <CommandWindow>
        <CommandGrip />
        <CommandBody>
          <HistoryRow>
            <History>
              {history.map((line, i) => (
                <HistoryLine key={i}>
                  <CommandText text={line} />
                </HistoryLine>
              ))}
            </History>
            <VScroll>
              <Arrow dir="up" />
              <Spacer />
              <Thumb $height={16} />
              <Arrow dir="down" />
            </VScroll>
          </HistoryRow>
          <PromptRow>
            <PromptLabel htmlFor="command">
              <CommandText text="命令:" />
            </PromptLabel>
            <PromptInput id="command" type="text" />
            <PromptScroll>
              <Arrow dir="left" />
              <Thumb $width={17} />
              <Spacer />
              <Arrow dir="right" />
            </PromptScroll>
          </PromptRow>
        </CommandBody>
      </CommandWindow>

      <StatusBar>
        <Coords>1826.3881, 1901.0311, 0.0000</Coords>
        {modes.map((mode) => (
          <StatusButton
            key={mode}
            type="button"
            $active={activeModes.includes(mode)}
            $latin={/^[A-Z]+$/.test(mode)}
            onClick={() => toggleMode(mode)}
          >
            {mode}
          </StatusButton>
        ))}
        <StatusTray>
          <StatusGroup>
            <StatusButton type="button">模型</StatusButton>
            {["layoutTri", "layouts"].map((name) => (
              <StatusIcon key={name} type="button" aria-label={name}>
                <Icon name={name} />
              </StatusIcon>
            ))}
          </StatusGroup>
          <StatusGroup>
            {["pan", "zoom", "wheel", "showMotion"].map((name) => (
              <StatusIcon key={name} type="button" aria-label={name}>
                <Icon name={name} />
              </StatusIcon>
            ))}
          </StatusGroup>
          <StatusGroup>
            <ScaleButton type="button">
              <Icon name="annoScale" />
              1:1
              <Caret $large />
            </ScaleButton>
            {["annoVis", "annoAuto"].map((name) => (
              <StatusIcon key={name} type="button" aria-label={name}>
                <Icon name={name} />
              </StatusIcon>
            ))}
          </StatusGroup>
          <ScaleButton type="button">
            <Icon name="gear" />A
          </ScaleButton>
        </StatusTray>
      </StatusBar>

      <Taskbar>
        <StartArea />
        <SearchArea />
        <TaskSpace />
        <ActiveTask />
        <Clock>15:50</Clock>
      </Taskbar>

      <Watermark>
        <svg width="36" height="26" aria-hidden="true">
          <path d="M0 0l17 8v17L0 17z" fill="#1c1c1c" />
          <path d="M17 8l18-3v17l-18 3z" fill="#333" />
        </svg>
        <span>中国大学MOOC</span>
      </Watermark>

      <ImeBar>
        <ImeButton type="button">
          <ImeBadge>iFLY</ImeBadge>
        </ImeButton>
        <ImeButton type="button">英</ImeButton>
        <ImeButton type="button" aria-label="标点">
          <svg width="16" height="16" fill="#4f74e8">
            <circle cx="4.500" cy="4.500" r="3" />
            <path d="M9 9.500a2.300 2.300 0 1 1 4.500 1c0 2-1 3.500-3 4l-.5-1c1-.4 1.400-1 1.500-1.700-1.500 0-2.500-1-2.500-2.300z" />
          </svg>
        </ImeButton>
        <ImeButton type="button" aria-label="语音">
          <svg width="16" height="16" fill="none" stroke="#4f74e8">
            <rect x="5" y="0" width="6" height="10" rx="3" fill="#4f74e8" stroke="none" />
            <path d="M2.500 7c0 7 11 7 11 0M8 12v4" strokeWidth="2" />
          </svg>
        </ImeButton>
        <ImeButton type="button" aria-label="用户">
          <svg width="16" height="16" fill="#4f74e8">
            <circle cx="8" cy="4" r="4" />
            <path d="M1 15c0-7 14-7 14 0z" />
          </svg>
        </ImeButton>
        <ImeButton type="button" aria-label="工具箱">
          <svg width="16" height="16" fill="#4f74e8">
            <rect x="0" y="1" width="7" height="6" rx="1" />
            <path d="M12 0l4 4-4 4-4-4z" />
            <rect x="0" y="9" width="7" height="6" rx="1" />
            <rect x="9" y="9" width="7" height="6" rx="1" />
          </svg>
        </ImeButton>
      </ImeBar>
    </Page>
  );
};

export default App;

const GlobalStyle = createGlobalStyle`
  * {
    box-sizing: border-box;
  }

  body {
    margin: 0;
    font-family: ${uiFont};
    font-size: 12px;
    color: #111;
  }

  button {
    margin: 0;
    padding: 0;
    border: 0;
    background: none;
    font: inherit;
    color: inherit;
    white-space: nowrap;
  }

  svg {
    display: block;
    flex-shrink: 0;
  }
`;

const dots = css`
  background-image: radial-gradient(#1c1c1c 1px, transparent 1px);
  background-size: 3px 3px;
  background-color: #7c7c7c;
`;

const Page = styled.div`
  position: relative;
  height: 100vh;
  display: flex;
  flex-direction: column;
  overflow: hidden;
  background: #666;
`;

const AppButton = styled.button`
  position: absolute;
  top: 0;
  left: 0;
  z-index: 2;
  width: 41px;
  height: 41px;
  display: flex;
  align-items: center;
  justify-content: center;
  border: 1px solid #333;
  background: linear-gradient(#d8d8d8, #8c8c8c 50%, #b4b4b4);
`;

const TitleBar = styled.header`
  flex: 0 0 24px;
  display: flex;
  justify-content: space-between;
  align-items: center;
  padding-left: 440px;
  background: #fff;
`;

const Title = styled.div`
  display: flex;
  gap: 26px;
  line-height: 24px;
`;

const WindowButtons = styled.div`
  display: flex;
`;

const WindowButton = styled.button`
  width: 46px;
  height: 24px;
  display: flex;
  align-items: center;
  justify-content: center;
`;

const MenuBar = styled.nav`
  flex: 0 0 21px;
  display: flex;
  align-items: center;
  gap: 1px;
  padding-left: 43px;
  border-top: 1px solid #333;
  background: linear-gradient(#9c9c9c, #666);
`;

const MenuItem = styled.button`
  padding: 0 12px;
  line-height: 20px;
  color: #fff;
`;

const DocButtons = styled.div`
  display: flex;
  margin-left: auto;
`;

const DocButton = styled.button`
  width: 17px;
  height: 20px;
  display: flex;
  align-items: center;
  justify-content: center;
`;

const ToolbarRows = styled.div`
  flex-shrink: 0;
  display: flex;
  flex-direction: column;
  gap: 3px;
  padding-bottom: 4px;
`;

const ToolbarRow = styled.div`
  display: flex;
  gap: ${({ $gap }) => $gap || 0}px;
`;

const Toolbar = styled.div`
  flex-shrink: 0;
  height: 24px;
  display: flex;
  align-items: stretch;
  border: 1px solid #3a3a3a;
  background: #ececee;
`;

const Grip = styled.div`
  width: 8px;
  border: solid #7c7c7c;
  border-width: 2px 1px;
  ${dots}
`;

const ToolButton = styled.button`
  width: 23px;
  display: flex;
  align-items: center;
  justify-content: center;
`;

const CaretButton = styled.button`
  width: 13px;
  display: flex;
  align-items: center;
  justify-content: center;
`;

const Caret = styled.span`
  border: solid transparent;
  border-width: ${({ $large }) => ($large ? "5px 4px 0" : "3px 3px 0")};
  border-top-color: ${({ $muted }) => ($muted ? "#aaa" : "#222")};
`;

const Separator = styled.div`
  width: ${({ $double }) => ($double ? 4 : 2)}px;
  margin: 2px ${({ $double }) => ($double ? 1 : 2)}px;
  border: solid #888;
  border-width: 0 ${({ $double }) => ($double ? 1 : 0)}px 0 1px;
`;

const HelpMark = styled.span`
  width: 13px;
  height: 15px;
  border: 1px solid #333;
  background: #fff;
  font-weight: 700;
  line-height: 13px;
  text-align: center;
`;

const ComboBox = styled.div`
  width: ${({ $width }) => $width}px;
  display: flex;
  align-items: center;
  padding-right: 3px;
  border: 1px solid #aaa;
  background: ${({ $disabled }) => ($disabled ? "#cfcfcf" : "#e1e1e1")};
`;

const comboFonts = {
  serif: css`
    font: 12px "Liberation Serif", serif;
  `,
  mono: css`
    font: 10px ${monoFont};
  `,
};

const ComboSelect = styled.select`
  flex: 1;
  min-width: 0;
  height: 20px;
  margin: 0;
  padding: 0 0 0 ${({ $indent }) => $indent}px;
  border: 0;
  background: none;
  appearance: none;
  font: 12px ${uiFont};
  color: #111;
  ${({ $font }) => comboFonts[$font]}

  &:disabled {
    color: #777;
    opacity: 1;
  }
`;

const LayerState = styled.span`
  display: flex;
`;

const Swatch = styled.span`
  width: 10px;
  height: 10px;
  margin-left: ${({ $inset }) => ($inset ? 4 : 0)}px;
  background: #000;
`;

const LineSample = styled.span`
  width: ${({ $width }) => $width}px;
  margin-left: 4px;
  border-top: 1px solid #111;
`;

const Workspace = styled.main`
  flex: 1;
  min-height: 0;
  display: flex;
  gap: 4px;
  padding: 0 1px 4px 0;
`;

const Dock = styled.aside`
  flex: 0 0 25px;
  overflow: hidden;
`;

const SideToolbar = styled.div`
  display: flex;
  flex-direction: column;
  border: solid #3a3a3a;
  border-width: 1px 2px 1px 1px;
  background: #ececee;
`;

const SideGrip = styled.div`
  height: 8px;
  border: solid #7c7c7c;
  border-width: 1px 3px;
  ${dots}
`;

const SideButton = styled.button`
  height: 22px;
  display: flex;
  align-items: center;
  justify-content: center;
`;

const LetterTool = styled.span`
  font: 18px "Liberation Sans", sans-serif;
  color: #111;
`;

const DrawingWindow = styled.section`
  flex: 1;
  min-width: 0;
  display: flex;
  flex-direction: column;
  border: 2px solid #e4e4e4;
  border-top: 1px solid #333;
  border-left-color: #aaa;
  border-bottom-width: 1px;
`;

const DrawingRow = styled.div`
  flex: 1;
  min-height: 0;
  display: flex;
`;

const Canvas = styled.div`
  position: relative;
  flex: 1;
  background: #d6d6d6;
`;

const Crosshair = styled.svg`
  position: absolute;
  left: 454px;
  top: 270px;
`;

const Ucs = styled.svg`
  position: absolute;
  left: 7px;
  bottom: 0;

  text {
    font: 15px "Open Sans", sans-serif;
    fill: #222;
    stroke: none;
  }
`;

const VScroll = styled.div`
  flex: 0 0 ${({ $width }) => $width || 16}px;
  display: flex;
  flex-direction: column;
  align-items: center;
  gap: 3px;
  padding: 4px 0;
  background: #f0f0f0;
`;

const HScroll = styled.div`
  flex: 1;
  display: flex;
  align-items: center;
  gap: 3px;
  padding: 0 4px;
  background: #f0f0f0;
`;

const Thumb = styled.div`
  width: ${({ $width }) => $width || 15}px;
  height: ${({ $height }) => $height || 13}px;
  background: #cdcdcd;
`;

const Spacer = styled.div`
  flex: 1;
`;

const Corner = styled.div`
  flex: 0 0 18px;
  background: #f0f0f0;
`;

const TabRow = styled.div`
  flex: 0 0 15px;
  display: flex;
`;

const TabBar = styled.div`
  flex: 0 0 65%;
  display: flex;
  border: solid #777;
  border-width: 1px 0;
  background: #f0f0f0;
`;

const TabNav = styled.button`
  width: 14px;
  border-right: 1px solid #aaa;
`;

const Slash = styled.span`
  width: 7px;
  background: linear-gradient(
    to ${({ $back }) => ($back ? "top" : "bottom")} right,
    transparent 46%,
    #555 46%,
    #555 54%,
    transparent 54%
  );
`;

const TabGroup = styled.div`
  display: flex;
`;

const Tab = styled.button`
  margin-top: ${({ $active }) => ($active ? -1 : 0)}px;
  padding: ${({ $active }) => ($active ? 2 : 1)}px 6px 0 3px;
  font: 12px/14px "Liberation Sans", "Noto Sans CJK SC", sans-serif;
  background: ${({ $active }) => ($active ? "#d6d6d6" : "none")};
`;

const Splitter = styled.div`
  flex: 0 0 4px;
  background: #c8c8c8;
`;

const CommandWindow = styled.section`
  flex: 0 0 88px;
  display: flex;
  background: #fff;
`;

const CommandGrip = styled.div`
  flex: 0 0 16px;
  padding: 3px 2px;
  background: #999;

  &::before {
    content: "";
    display: block;
    height: 6px;
    ${dots}
    background-color: #999;
  }
`;

const CommandBody = styled.div`
  flex: 1;
  min-width: 0;
  display: flex;
  flex-direction: column;
`;

const HistoryRow = styled.div`
  flex: 1;
  min-height: 0;
  display: flex;
  border-bottom: 1px solid #999;
`;

const History = styled.div`
  flex: 1;
  padding: 3px 2px 0;
  font: 13px/16px ${monoFont};
  white-space: pre;
`;

const HistoryLine = styled.div`
  height: 16px;
`;

const Wide = styled.span`
  font-size: 16px;
  line-height: 16px;
`;

const PromptRow = styled.div`
  flex: 0 0 18px;
  display: flex;
  padding-left: 2px;
`;

const PromptLabel = styled.label`
  padding-top: 2px;
  font: 13px/16px ${monoFont};
`;

const PromptInput = styled.input`
  flex: 1;
  min-width: 0;
  padding: 0 8px;
  border: 0;
  outline: 0;
  background: none;
  font: 13px ${monoFont};
`;

const PromptScroll = styled.div`
  flex: 0 0 70px;
  display: flex;
  align-items: center;
  gap: 3px;
  padding: 0 4px;
  margin-right: 14px;
  background: #f0f0f0;
`;

const StatusBar = styled.footer`
  flex: 0 0 22px;
  display: flex;
  border-top: 1px solid #222;
  background: linear-gradient(#7c7c7c, #969696);
  font: 12px/18px ${monoFont};
`;

const Coords = styled.div`
  width: 229px;
  padding: 4px 12px 0;
  font-size: 10px;
  white-space: nowrap;
`;

const StatusButton = styled.button`
  display: flex;
  align-items: center;
  padding: 3px 3px 0 2px;
  border-left: 1px solid #444;
  background: ${({ $active }) =>
    $active ? "linear-gradient(#d4eef5, #8cc3d4)" : "linear-gradient(#a0a0a0, #c0c0c0)"};
  font-size: ${({ $latin }) => ($latin ? 10 : 12)}px;
`;

const ScaleButton = styled(StatusButton)`
  gap: 2px;
  padding: 0 3px 0 2px;
  font-size: 10px;
`;

const StatusTray = styled.div`
  display: flex;
  gap: 6px;
  margin-left: auto;
  padding-right: 164px;
`;

const StatusGroup = styled.div`
  display: flex;
  margin-right: 12px;
  border-right: 1px solid #444;

  &:nth-child(3) {
    margin-right: 0;
  }
`;

const StatusIcon = styled.button`
  width: 22px;
  display: flex;
  align-items: center;
  justify-content: center;
  border-left: 1px solid #444;
  background: linear-gradient(#a0a0a0, #c0c0c0);
`;

const Taskbar = styled.div`
  flex: 0 0 8px;
  display: flex;
  overflow: hidden;
  background: linear-gradient(90deg, #22384a 30%, #1a2742 70%);
`;

const StartArea = styled.div`
  width: 48px;
  background: #1f3844;
`;

const SearchArea = styled.div`
  width: 344px;
  background: #f2f2f2;
`;

const TaskSpace = styled.div`
  width: 199px;
`;

const ActiveTask = styled.div`
  width: 48px;
  background: #4a5c6e;
`;

const Clock = styled.time`
  margin-left: auto;
  padding: 2px 73px 0 0;
  line-height: 16px;
  color: #fff;
`;

const Watermark = styled.div`
  position: absolute;
  top: 30px;
  right: 44px;
  display: flex;
  gap: 2px;
  font: 22px/28px "Open Sans", "Noto Sans CJK SC", sans-serif;
  color: #222;
  opacity: 0.75;
  pointer-events: none;
`;

const ImeBar = styled.div`
  position: absolute;
  right: 0;
  bottom: 8px;
  height: 29px;
  display: flex;
  align-items: center;
  border: 1px solid #bbb;
  background: #fff;
`;

const ImeButton = styled.button`
  min-width: 27px;
  display: flex;
  align-items: center;
  justify-content: center;
  font-size: 17px;
  font-weight: 700;
  color: #4f74e8;
`;

const ImeBadge = styled.span`
  width: 22px;
  height: 22px;
  margin: 0 4px;
  border: 2px solid #4f74e8;
  border-radius: 50%;
  font-size: 7px;
  line-height: 18px;
`;
